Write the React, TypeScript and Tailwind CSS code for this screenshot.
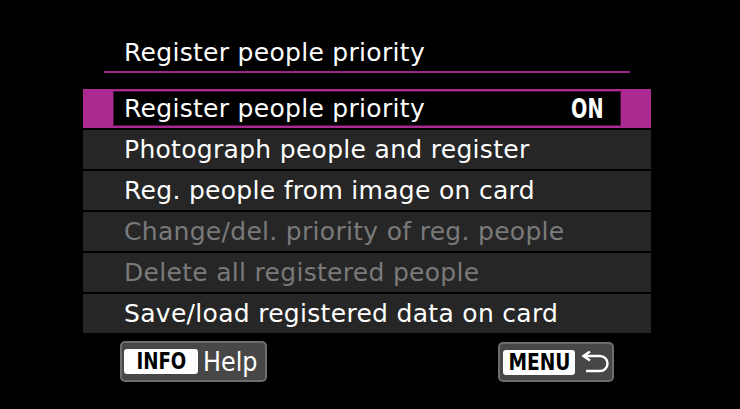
import React from "react";

const sans = { fontFamily: '"DejaVu Sans", "Noto Sans", sans-serif' };
const cond = { fontFamily: '"DejaVu Sans Condensed", "DejaVu Sans", sans-serif' };

const rows: { label: string; disabled?: boolean }[] = [
  { label: "Photograph people and register" },
  { label: "Reg. people from image on card" },
  { label: "Change/del. priority of reg. people", disabled: true },
  { label: "Delete all registered people", disabled: true },
  { label: "Save/load registered data on card" },
];

function ReturnIcon() {
  return (
    <svg width="31" height="23" viewBox="0 0 31 23" fill="none">
      <path d="M5 5 H21 A7.5 7.5 0 0 1 21 20 H7" stroke="white" strokeWidth="2.4" />
      <path d="M11 0.5 L4.5 5 L11 9.5" stroke="white" strokeWidth="2.4" strokeLinejoin="miter" />
    </svg>
  );
}

export default function App() {
  return (
    <div className="w-[740px] h-[409px] bg-black flex flex-col overflow-hidden" style={sans}>
      <div className="ml-[104px] w-[526px] pt-[39px]">
        <div className="pl-[20px] text-[25px] leading-[28px] tracking-[0.3px] text-white">Register people priority</div>
        <div className="mt-[4px] h-[2px] bg-[#9a2586]" />
      </div>
      <div className="ml-[83px] w-[568px] mt-[16px] flex flex-col gap-[2px]">
        <div className="h-[39px] bg-[#ab2a91] px-[30px] py-[2px] flex">
          <div className="flex-1 bg-black border border-[#4a1240] flex items-center justify-between pl-[10px] pr-[17px]">
            <span className="text-[25px] leading-[33px] tracking-[0.3px] text-white">Register people priority</span>
            <span className="text-[26px] leading-none font-bold text-white scale-x-[0.82] origin-right" style={cond}>ON</span>
          </div>
        </div>
        {rows.map((r) => (
          <div key={r.label} className="h-[39px] bg-[#262626] pl-[41px]">
            <span className={`text-[25px] leading-[40px] tracking-[0.3px] ${r.disabled ? "text-[#7a7a7a]" : "text-white"}`}>{r.label}</span>
          </div>
        ))}
      </div>
      <div className="mt-[8px] flex items-start">
        <div className="ml-[120px] w-[147px] h-[41px] bg-[#474747] border-2 border-[#6d6d6d] rounded-[5px] flex items-center pl-[2px]">
          <div className="w-[74px] h-[25px] bg-white rounded-[3px] flex items-center justify-center">
            <span className="text-[23px] font-bold text-black leading-none scale-x-[0.88]" style={cond}>INFO</span>
          </div>
          <span className="ml-[5px] text-[26px] leading-none text-white scale-x-[0.92] origin-left">Help</span>
        </div>
        <div className="ml-[231px] mt-[1px] w-[116px] h-[40px] bg-[#474747] border-2 border-[#6d6d6d] rounded-[5px] flex items-center pl-[3px]">
          <div className="w-[72px] h-[25px] bg-white rounded-[3px] flex items-center justify-center">
            <span className="text-[23px] font-bold text-black leading-none scale-x-[0.9]" style={cond}>MENU</span>
          </div>
          <span className="ml-[4px] flex items-center">
            <ReturnIcon />
          </span>
        </div>
      </div>
    </div>
  );
}
